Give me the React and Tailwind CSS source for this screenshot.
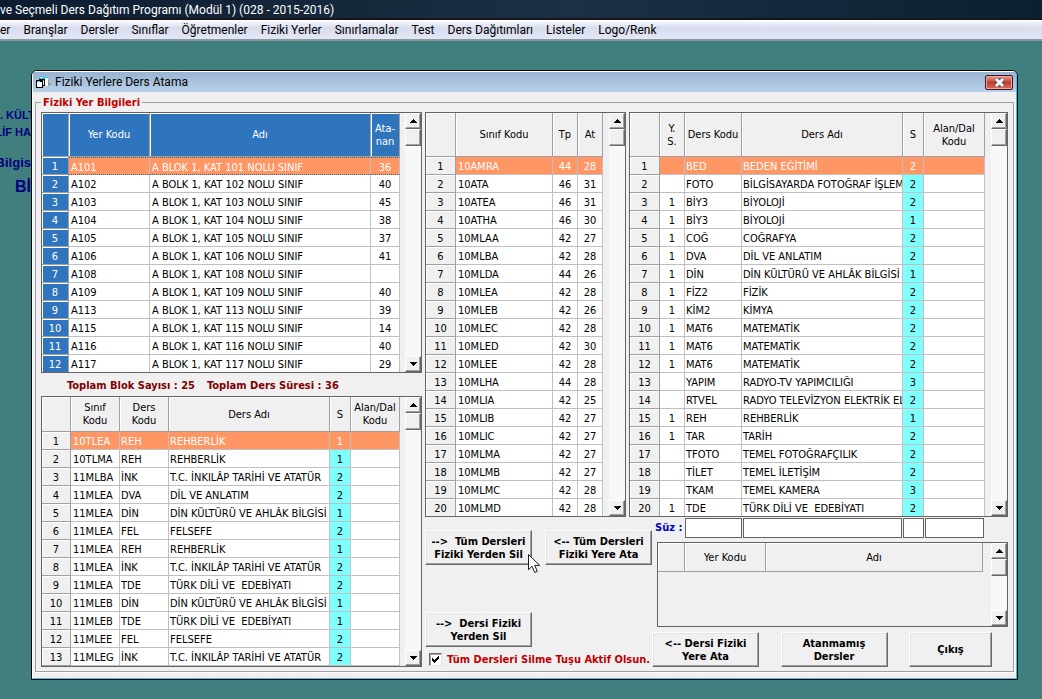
import React from 'react';

const menuItems = [
  'er', 'Branşlar', 'Dersler', 'Sınıflar', 'Öğretmenler', 'Fiziki Yerler',
  'Sınırlamalar', 'Test', 'Ders Dağıtımları', 'Listeler', 'Logo/Renk',
];

const rooms = [
  ['A101', 'A BLOK 1, KAT 101 NOLU SINIF', '36'],
  ['A102', 'A BOLK 1, KAT 102 NOLU SINIF', '40'],
  ['A103', 'A BLOK 1, KAT 103 NOLU SINIF', '45'],
  ['A104', 'A BLOK 1, KAT 104 NOLU SINIF', '38'],
  ['A105', 'A BLOK 1, KAT 105 NOLU SINIF', '37'],
  ['A106', 'A BLOK 1, KAT 106 NOLU SINIF', '41'],
  ['A108', 'A BLOK 1, KAT 108 NOLU SINIF', ''],
  ['A109', 'A BLOK 1, KAT 109 NOLU SINIF', '40'],
  ['A113', 'A BLOK 1, KAT 113 NOLU SINIF', '39'],
  ['A115', 'A BLOK 1, KAT 115 NOLU SINIF', '14'],
  ['A116', 'A BLOK 1, KAT 116 NOLU SINIF', '40'],
  ['A117', 'A BLOK 1, KAT 117 NOLU SINIF', '29'],
];

const assigned = [
  ['10TLEA', 'REH', 'REHBERLİK', '1', ''],
  ['10TLMA', 'REH', 'REHBERLİK', '1', ''],
  ['11MLBA', 'İNK', 'T.C. İNKILÂP TARİHİ VE ATATÜR', '2', ''],
  ['11MLEA', 'DVA', 'DİL VE ANLATIM', '2', ''],
  ['11MLEA', 'DİN', 'DİN KÜLTÜRÜ VE AHLÂK BİLGİSİ', '1', ''],
  ['11MLEA', 'FEL', 'FELSEFE', '2', ''],
  ['11MLEA', 'REH', 'REHBERLİK', '1', ''],
  ['11MLEA', 'İNK', 'T.C. İNKILÂP TARİHİ VE ATATÜR', '2', ''],
  ['11MLEA', 'TDE', 'TÜRK DİLİ VE  EDEBİYATI', '2', ''],
  ['11MLEB', 'DİN', 'DİN KÜLTÜRÜ VE AHLÂK BİLGİSİ', '1', ''],
  ['11MLEB', 'TDE', 'TÜRK DİLİ VE  EDEBİYATI', '1', ''],
  ['11MLEE', 'FEL', 'FELSEFE', '2', ''],
  ['11MLEG', 'İNK', 'T.C. İNKILÂP TARİHİ VE ATATÜR', '2', ''],
];

const classes = [
  ['10AMRA', '44', '28'],
  ['10ATA', '46', '31'],
  ['10ATEA', '46', '31'],
  ['10ATHA', '46', '30'],
  ['10MLAA', '42', '27'],
  ['10MLBA', '42', '28'],
  ['10MLDA', '44', '26'],
  ['10MLEA', '42', '28'],
  ['10MLEB', '42', '26'],
  ['10MLEC', '42', '28'],
  ['10MLED', '42', '30'],
  ['10MLEE', '42', '28'],
  ['10MLHA', '44', '28'],
  ['10MLIA', '42', '25'],
  ['10MLIB', '42', '27'],
  ['10MLIC', '42', '27'],
  ['10MLMA', '42', '27'],
  ['10MLMB', '42', '27'],
  ['10MLMC', '42', '28'],
  ['10MLMD', '42', '28'],
];

const courses = [
  ['', 'BED', 'BEDEN EĞİTİMİ', '2', ''],
  ['', 'FOTO', 'BİLGİSAYARDA FOTOĞRAF İŞLEM', '2', ''],
  ['1', 'BİY3', 'BİYOLOJİ', '2', ''],
  ['1', 'BİY3', 'BİYOLOJİ', '1', ''],
  ['1', 'COĞ', 'COĞRAFYA', '2', ''],
  ['1', 'DVA', 'DİL VE ANLATIM', '2', ''],
  ['1', 'DİN', 'DİN KÜLTÜRÜ VE AHLÂK BİLGİSİ', '1', ''],
  ['1', 'FİZ2', 'FİZİK', '2', ''],
  ['1', 'KİM2', 'KİMYA', '2', ''],
  ['1', 'MAT6', 'MATEMATİK', '2', ''],
  ['1', 'MAT6', 'MATEMATİK', '2', ''],
  ['1', 'MAT6', 'MATEMATİK', '2', ''],
  ['', 'YAPIM', 'RADYO-TV YAPIMCILIĞI', '3', ''],
  ['', 'RTVEL', 'RADYO TELEVİZYON ELEKTRİK EL', '2', ''],
  ['1', 'REH', 'REHBERLİK', '1', ''],
  ['1', 'TAR', 'TARİH', '2', ''],
  ['', 'TFOTO', 'TEMEL FOTOĞRAFÇILIK', '2', ''],
  ['', 'TİLET', 'TEMEL İLETİŞİM', '2', ''],
  ['', 'TKAM', 'TEMEL KAMERA', '3', ''],
  ['1', 'TDE', 'TÜRK DİLİ VE  EDEBİYATI', '2', ''],
];

const ScrollButton = ({ down, label }) => (
  <button
    aria-label={label}
    className="flex h-4 w-4 shrink-0 items-center justify-center border border-t-white border-l-white border-r-[#696969] border-b-[#696969] bg-[#f0f0f0] shadow-[inset_-1px_-1px_0_#a0a0a0]"
  >
    <svg width="7" height="4" viewBox="0 0 7 4" shapeRendering="crispEdges">
      <path d={down ? 'M0 0h7v1H0zM1 1h5v1H1zM2 2h3v1H2zM3 3h1v1H3z' : 'M3 0h1v1H3zM2 1h3v1H2zM1 2h5v1H1zM0 3h7v1H0z'} fill="#000" />
    </svg>
  </button>
);

const Scrollbar = () => (
  <div className="flex w-4 shrink-0 flex-col bg-[#f8f8f8]">
    <ScrollButton label="Yukarı" />
    <div className="h-[17px] shrink-0 border border-t-white border-l-white border-r-[#696969] border-b-[#696969] bg-[#f0f0f0] shadow-[inset_-1px_-1px_0_#a0a0a0]"></div>
    <div className="grow"></div>
    <ScrollButton down label="Aşağı" />
  </div>
);

// cols: { title, w, align, cyan } - a column without a width takes what is left
const Grid = ({ cols, rows, numW, headH, gutter, height, blue }) => {
  const fixed = blue
    ? 'bg-[#2f75bd] text-white border-[#a0a0a0] shadow-[inset_1px_1px_0_#fff]'
    : 'bg-[#f0f0f0] border-[#a0a0a0] shadow-[inset_1px_1px_0_#fff]';
  return (
    <div className={`flex overflow-hidden border border-[#646464] bg-[#f0f0f0] ${height}`}>
      <div className={`min-w-0 grow ${gutter}`}>
        <table className="w-full table-fixed border-separate border-spacing-0 whitespace-pre text-[11px] leading-[13px]">
          <colgroup>
            <col className={numW} />
            {cols.map((c) => <col key={c.title} className={c.w} />)}
          </colgroup>
          <thead>
            <tr className={headH}>
              <th className={`border-r border-b p-0 ${fixed}`}></th>
              {cols.map((c) => (
                <th key={c.title} scope="col" className={`border-r border-b p-0 text-center align-middle font-normal ${fixed}`}>
                  {c.title}
                </th>
              ))}
            </tr>
          </thead>
          <tbody>
            {rows.map((row, i) => (
              <tr key={i} className="h-[18px]">
                <th scope="row" className={`border-r border-b px-0 pt-0.5 pb-0 text-center font-normal ${fixed}`}>{i + 1}</th>
                {row.map((cell, j) => (
                  <td
                    key={j}
                    className={`overflow-hidden border-r pt-0.5 pb-0 ${cols[j].align || 'pl-px text-left'} ${
                      i === 0 ? 'bg-[#ff9664] text-white' : cols[j].cyan ? 'bg-[#80ffff]' : 'bg-white'
                    } ${i === 0 && blue ? 'border-y border-r-[#c0c0c0] border-y-[#2f6d8a] [border-bottom-style:dotted] [border-top-style:dotted]' : 'border-b border-[#c0c0c0]'}`}
                  >
                    {cell}
                  </td>
                ))}
              </tr>
            ))}
          </tbody>
        </table>
      </div>
      <Scrollbar />
    </div>
  );
};

const PushButton = ({ children, className = 'w-[107px]' }) => (
  <button
    className={`h-[35px] shrink-0 whitespace-pre border border-t-white border-l-white border-r-[#696969] border-b-[#696969] bg-[#f0f0f0] text-center text-[11px] leading-[13px] font-bold shadow-[inset_-1px_-1px_0_#a0a0a0,inset_1px_1px_0_#e3e3e3] ${className}`}
  >
    {children}
  </button>
);

const Cursor = () => (
  <svg className="absolute top-6 left-[103px] z-10" width="13" height="20" viewBox="0 0 13 20">
    <path d="M.5.5v15.2l3.6-3.4 2.6 6.2 2.6-1.1-2.6-6h5z" fill="#fff" stroke="#1c1c2c" strokeLinejoin="round" />
  </svg>
);

const FormIcon = () => (
  <svg width="16" height="13" viewBox="0 0 16 13" shapeRendering="crispEdges">
    <path d="M4 1h8v9H4z" fill="#fff" />
    <path d="M3 1h1v2H3zM12 4h1v6h-1zM13 7h2v2h-2z" fill="#9a9a9a" />
    <path d="M4 0h4v1H4zM7 1h5v1H7zM4 2h5v1H4z" fill="#19d6e6" />
    <path d="M3 3h6v7H3z" fill="#000" />
    <path d="M4 5h4v4H4z" fill="#fff" />
    <path d="M4 4h4v1H4z" fill="#19d6e6" />
    <path d="M0 4h7v8H0z" fill="#000" />
    <path d="M1 6h5v5H1z" fill="#fff" />
    <path d="M1 5h3v1H1z" fill="#19d6e6" />
  </svg>
);

const center = 'px-0 text-center';

const App = () => {
  return (
    <div className="flex min-h-screen flex-col overflow-hidden bg-[#417f7f] font-['DejaVu_Sans_Condensed','DejaVu_Sans',sans-serif] text-black">

      {/* --- Main window caption and menu --- */}
      <header className="font-['Roboto','Noto_Sans',sans-serif] text-[12px]">
        <div className="h-[18px] overflow-hidden bg-linear-to-r from-[#0c1d31] via-[#1d2f44] via-55% to-[#0c1f33] pt-px leading-[18px] whitespace-nowrap text-white">
          ve Seçmeli Ders Dağıtım Programı (Modül 1) (028 - 2015-2016)
        </div>
        <nav className="flex h-[23px] items-center gap-[13px] border-t-2 border-b-2 border-t-[#15151d] border-b-[#8a9a9e] bg-linear-to-b from-white via-[#d8ddee] via-40% to-[#e3e6f5] leading-4 whitespace-nowrap">
          {menuItems.map((item) => <button key={item}>{item}</button>)}
        </nav>
      </header>

      <div className="flex grow items-start">
        {/* school name, mostly hidden behind the form */}
        <div className="flex w-[31px] shrink-0 flex-col items-end overflow-hidden pt-[66px] font-['Liberation_Sans',Arial,sans-serif] text-[11px] leading-[17px] font-bold whitespace-nowrap text-[#000080]">
          <div className="self-start">. KÜLT</div>
          <div>LİF HA</div>
          <div className="mt-3 text-[13px] leading-5">Bilgis</div>
          <div className="mt-1 text-[16px] leading-5">Bİ</div>
        </div>

        {/* --- Form window --- */}
        <main className="mt-[29px] mr-6 min-w-0 grow overflow-hidden rounded-t-md border border-black bg-[#f0f0f0]">
          <div className="border-r border-b border-l border-r-[#35c5ea] border-b-[#35c5ea] border-l-white">
            <div className="flex h-[21px] items-center border-t border-white bg-linear-to-b from-[#99b4d1] to-[#b9d1ea] pr-[3px] pl-[3px]">
              <FormIcon />
              <h1 className="grow pl-[3px] font-['Roboto','Noto_Sans',sans-serif] text-[12px] leading-4">Fiziki Yerlere Ders Atama</h1>
              <button aria-label="Kapat" className="flex h-[15px] w-7 items-center justify-center rounded-xs border border-[#4a1520] bg-linear-to-b from-[#e3a097] via-[#c03a2b] via-50% to-[#d5705c] shadow-[inset_0_0_0_1px_#e9aba0]">
                <svg width="13" height="9" viewBox="0 0 13 9">
                  <path d="M3 1l7 7M10 1l-7 7" stroke="#4c4c5c" strokeWidth="5" />
                  <path d="M3 1l7 7M10 1l-7 7" stroke="#f4f4f4" strokeWidth="3" />
                </svg>
              </button>
            </div>

            <fieldset className="mx-0.5 mt-1 mb-[6px] min-w-0 border border-[#a0a0a0] px-[5px] pt-[3px] pb-1 shadow-[1px_1px_0_#fff]">
              <legend className="px-0.5 text-[11px] leading-[13px] font-bold text-[#c00000]">Fiziki Yer Bilgileri</legend>

              <div className="flex gap-[3px]">
                {/* Left: rooms and what is assigned to them */}
                <div className="min-w-0 shrink-0 grow basis-[381px]">
                  <Grid
                    blue
                    height="h-[261px]"
                    numW="w-[27px]"
                    headH="h-11"
                    gutter="mr-[5px]"
                    cols={[
                      { title: 'Yer Kodu', w: 'w-[81px]', align: 'pl-0.5 text-left' },
                      { title: 'Adı', align: 'pl-0.5 text-left' },
                      { title: 'Ata-\nnan', w: 'w-[29px]', align: center },
                    ]}
                    rows={rooms}
                  />
                  <div className="flex h-[23px] items-center gap-3 pt-0.5 pl-[26px] text-[11px] leading-[13px] font-bold text-[#800000]">
                    <span>Toplam Blok Sayısı : 25</span>
                    <span>Toplam Ders Süresi : 36</span>
                  </div>
                  <Grid
                    height="h-[271px]"
                    numW="w-[29px]"
                    headH="h-[35px]"
                    gutter="mr-[5px]"
                    cols={[
                      { title: 'Sınıf\nKodu', w: 'w-[49px]', align: 'pl-0.5 text-left' },
                      { title: 'Ders\nKodu', w: 'w-[49px]' },
                      { title: 'Ders Adı' },
                      { title: 'S', w: 'w-[21px]', align: center, cyan: true },
                      { title: 'Alan/Dal\nKodu', w: 'w-[49px]' },
                    ]}
                    rows={assigned}
                  />
                </div>

                {/* Right: classes, courses and the actions */}
                <div className="min-w-0 grow basis-[583px]">
                  <div className="flex gap-[3px]">
                    <div className="w-[201px] shrink-0">
                      <Grid
                        height="h-[405px]"
                        numW="w-[30px]"
                        headH="h-11"
                        gutter="mr-[6px]"
                        cols={[
                          { title: 'Sınıf Kodu', align: 'pl-0.5 text-left' },
                          { title: 'Tp', w: 'w-[25px]', align: center },
                          { title: 'At', w: 'w-[25px]', align: center },
                        ]}
                        rows={classes}
                      />
                    </div>
                    <div className="min-w-0 grow">
                      <Grid
                        height="h-[405px]"
                        numW="w-[30px]"
                        headH="h-11"
                        gutter="mr-[6px]"
                        cols={[
                          { title: 'Y.\nS.', w: 'w-[25px]', align: center },
                          { title: 'Ders Kodu', w: 'w-[57px]' },
                          { title: 'Ders Adı' },
                          { title: 'S', w: 'w-[21px]', align: center, cyan: true },
                          { title: 'Alan/Dal\nKodu', w: 'w-[61px]' },
                        ]}
                        rows={courses}
                      />
                    </div>
                  </div>

                  <div className="flex">
                    <div className="w-[227px] shrink-0 pt-[13px]">
                      <div className="relative flex justify-between">
                        <PushButton>{'-->  Tüm Dersleri\nFiziki Yerden Sil'}</PushButton>
                        <PushButton>{'<-- Tüm Dersleri\nFiziki Yere Ata'}</PushButton>
                        <Cursor />
                      </div>
                      <div className="mt-[47px] flex">
                        <PushButton>{'-->  Dersi Fiziki\nYerden Sil'}</PushButton>
                      </div>
                      <label className="mt-[6px] ml-1 flex items-center gap-[5px] text-[11px] leading-[13px] font-bold whitespace-nowrap text-[#c00000]">
                        <span className="relative flex h-[13px] w-[13px] shrink-0">
                          <input
                            type="checkbox"
                            defaultChecked
                            className="peer h-[13px] w-[13px] appearance-none border border-t-[#696969] border-l-[#696969] border-r-[#e3e3e3] border-b-[#e3e3e3] bg-white shadow-[inset_1px_1px_0_#a0a0a0]"
                          />
                          <svg className="pointer-events-none absolute top-[3px] left-[3px] hidden peer-checked:block" width="7" height="7" viewBox="0 0 7 7" shapeRendering="crispEdges">
                            <path d="M0 2h1v1h1v1h1V3h1V2h1V1h1V0h1v3H6v1H5v1H4v1H3v1H2V6H1V5H0z" fill="#000" />
                          </svg>
                        </span>
                        Tüm Dersleri Silme Tuşu Aktif Olsun.
                      </label>
                    </div>

                    <div className="min-w-0 grow pt-px">
                      <div className="mr-6 flex h-5 gap-px">
                        <label htmlFor="filter-code" className="w-8 shrink-0 pl-[3px] text-[11px] leading-5 font-bold whitespace-nowrap text-[#0000c0]">Süz :</label>
                        <input id="filter-code" className="w-[57px] border border-[#646464] bg-white px-0.5 text-[11px]" />
                        <input aria-label="Ders Adı" className="w-0 grow border border-[#646464] bg-white px-0.5 text-[11px]" />
                        <input aria-label="S" className="w-[21px] border border-[#646464] bg-white px-0.5 text-[11px]" />
                        <input aria-label="Alan/Dal Kodu" className="w-[59px] border border-[#646464] bg-white px-0.5 text-[11px]" />
                      </div>
                      <div className="mt-1 ml-[5px]">
                        <Grid
                          height="h-[85px]"
                          numW="w-[27px]"
                          headH="h-[29px]"
                          gutter="mr-2"
                          cols={[{ title: 'Yer Kodu', w: 'w-[81px]' }, { title: 'Adı' }]}
                          rows={[]}
                        />
                      </div>
                      <div className="mt-[5px] flex justify-between pr-4">
                        <PushButton>{'<-- Dersi Fiziki\nYere Ata'}</PushButton>
                        <PushButton>{'Atanmamış\nDersler'}</PushButton>
                        <PushButton className="w-[83px]">Çıkış</PushButton>
                      </div>
                    </div>
                  </div>
                </div>
              </div>
            </fieldset>
          </div>
        </main>
      </div>
    </div>
  );
};

export default App;
